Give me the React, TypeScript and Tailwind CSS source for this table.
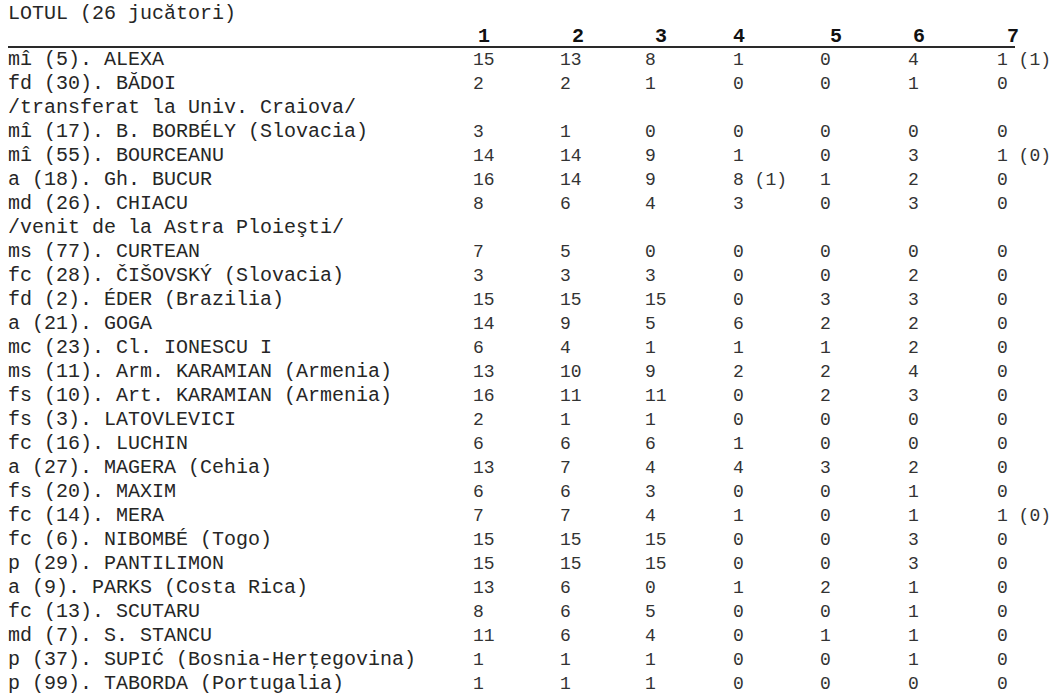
type Row = { name: string; vals?: string[] };

const rows: Row[] = [
  { name: "mî (5). ALEXA", vals: ["15", "13", "8", "1", "0", "4", "1 (1)"] },
  { name: "fd (30). BĂDOI", vals: ["2", "2", "1", "0", "0", "1", "0"] },
  { name: "/transferat la Univ. Craiova/" },
  { name: "mî (17). B. BORBÉLY (Slovacia)", vals: ["3", "1", "0", "0", "0", "0", "0"] },
  { name: "mî (55). BOURCEANU", vals: ["14", "14", "9", "1", "0", "3", "1 (0)"] },
  { name: "a (18). Gh. BUCUR", vals: ["16", "14", "9", "8 (1)", "1", "2", "0"] },
  { name: "md (26). CHIACU", vals: ["8", "6", "4", "3", "0", "3", "0"] },
  { name: "/venit de la Astra Ploieşti/" },
  { name: "ms (77). CURTEAN", vals: ["7", "5", "0", "0", "0", "0", "0"] },
  { name: "fc (28). ČIŠOVSKÝ (Slovacia)", vals: ["3", "3", "3", "0", "0", "2", "0"] },
  { name: "fd (2). ÉDER (Brazilia)", vals: ["15", "15", "15", "0", "3", "3", "0"] },
  { name: "a (21). GOGA", vals: ["14", "9", "5", "6", "2", "2", "0"] },
  { name: "mc (23). Cl. IONESCU I", vals: ["6", "4", "1", "1", "1", "2", "0"] },
  { name: "ms (11). Arm. KARAMIAN (Armenia)", vals: ["13", "10", "9", "2", "2", "4", "0"] },
  { name: "fs (10). Art. KARAMIAN (Armenia)", vals: ["16", "11", "11", "0", "2", "3", "0"] },
  { name: "fs (3). LATOVLEVICI", vals: ["2", "1", "1", "0", "0", "0", "0"] },
  { name: "fc (16). LUCHIN", vals: ["6", "6", "6", "1", "0", "0", "0"] },
  { name: "a (27). MAGERA (Cehia)", vals: ["13", "7", "4", "4", "3", "2", "0"] },
  { name: "fs (20). MAXIM", vals: ["6", "6", "3", "0", "0", "1", "0"] },
  { name: "fc (14). MERA", vals: ["7", "7", "4", "1", "0", "1", "1 (0)"] },
  { name: "fc (6). NIBOMBÉ (Togo)", vals: ["15", "15", "15", "0", "0", "3", "0"] },
  { name: "p (29). PANTILIMON", vals: ["15", "15", "15", "0", "0", "3", "0"] },
  { name: "a (9). PARKS (Costa Rica)", vals: ["13", "6", "0", "1", "2", "1", "0"] },
  { name: "fc (13). SCUTARU", vals: ["8", "6", "5", "0", "0", "1", "0"] },
  { name: "md (7). S. STANCU", vals: ["11", "6", "4", "0", "1", "1", "0"] },
  { name: "p (37). SUPIĆ (Bosnia-Herţegovina)", vals: ["1", "1", "1", "0", "0", "1", "0"] },
  { name: "p (99). TABORDA (Portugalia)", vals: ["1", "1", "1", "0", "0", "0", "0"] },
];

const headerPads = ["pl-[5px]", "pl-[12px]", "pl-[10px]", "pl-0", "pl-[10px]", "pl-[5px]", "pl-[10px]"];

const grid = "grid grid-cols-[465px_87px_85px_88px_87px_88px_89px_1fr]";

export default function App() {
  return (
    <div
      className="w-[1050px] h-[700px] overflow-hidden bg-white text-[#262626] pl-[8px] pt-[2px]"
      style={{ fontFamily: "'Liberation Mono', 'Courier New', monospace" }}
    >
      {/* Title */}
      <div className="h-[23px] text-[20px] leading-[24px] whitespace-pre">LOTUL (26 jucători)</div>

      {/* Column numbers */}
      <div className={`${grid} w-[1007px] h-[23px] border-b-2 border-[#2a2a2a] text-[20px] leading-[24px] font-bold text-[#111]`}>
        <div />
        {headerPads.map((p, i) => (
          <div key={i} className={p}>
            {i + 1}
          </div>
        ))}
      </div>

      {/* Players */}
      {rows.map((r, i) => (
        <div key={i} className={`${grid} h-[24px] leading-[24px] whitespace-pre`}>
          {r.vals ? (
            <>
              <div className="text-[20px]">{r.name}</div>
              {r.vals.map((v, j) => (
                <div key={j} className="text-[18px] text-[#333]">
                  {v}
                </div>
              ))}
            </>
          ) : (
            <div className="col-span-8 text-[20px]">{r.name}</div>
          )}
        </div>
      ))}
    </div>
  );
}
